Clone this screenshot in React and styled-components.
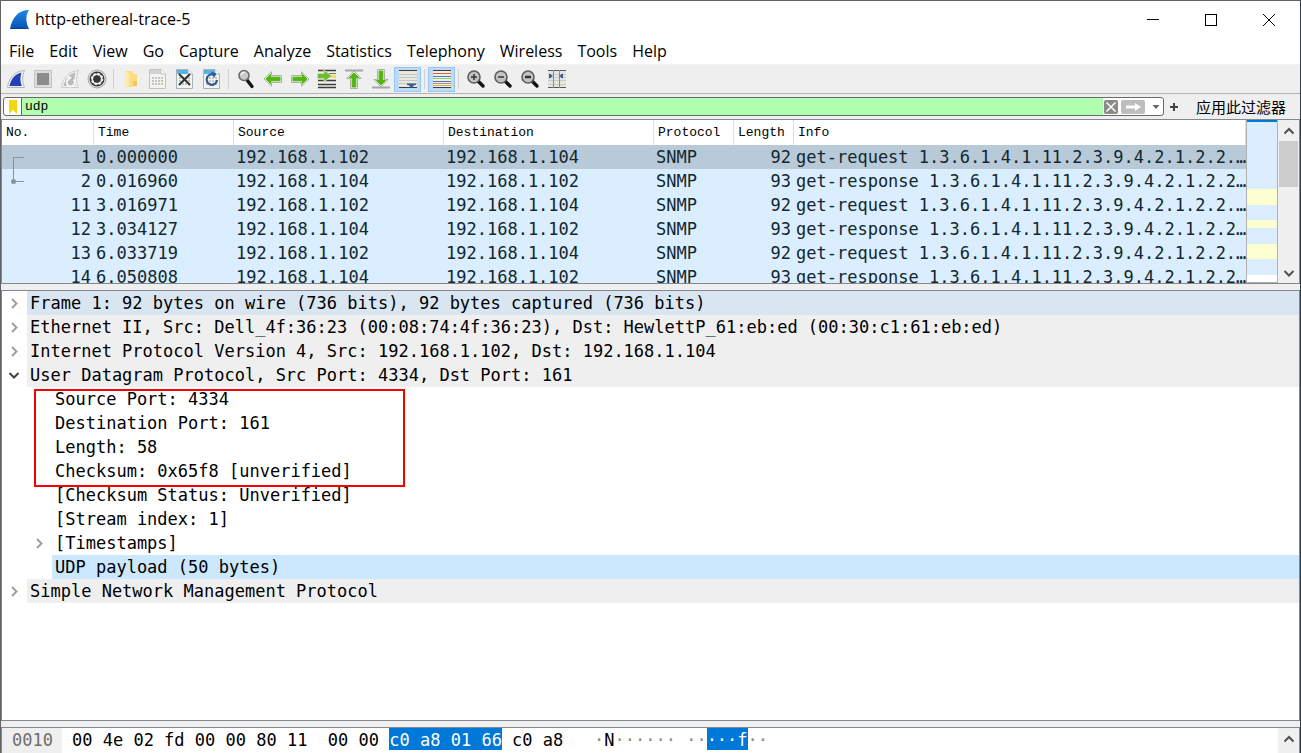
import React from "react";
import styled, { createGlobalStyle, css } from "styled-components";

const ui = `"Open Sans", "Noto Sans", "Noto Sans CJK SC", sans-serif`;
const mono = `"DejaVu Sans Mono", "Liberation Mono", monospace`;
const typewriter = `"Liberation Mono", "DejaVu Sans Mono", monospace`;

const GlobalStyle = createGlobalStyle`
  * {
    box-sizing: border-box;
  }
  body {
    margin: 0;
    background: #efefef;
  }
  button, input {
    font: inherit;
    color: inherit;
    margin: 0;
    padding: 0;
    border: none;
    background: none;
    outline: none;
  }
`;

const StyledWindow = styled.div`
  display: flex;
  flex-direction: column;
  height: 100vh;
  border: 1px solid #626266;
  border-right-color: #2c3e4a;
  border-bottom: none;
  background: #efefef;
  color: #000;
  font-family: ${ui};
  font-size: 16px;
  overflow: hidden;
`;

const StyledTitleBar = styled.header`
  display: flex;
  align-items: center;
  height: 37px;
  flex: none;
  padding: 0 2px 0 8px;
  background: #fff;
`;

const StyledTitle = styled.h1`
  flex: 1;
  margin: 0 0 0 5px;
  font-size: 16px;
  font-weight: 400;
  line-height: 35px;
`;

const StyledWindowButton = styled.button`
  display: flex;
  align-items: center;
  justify-content: center;
  width: 58px;
  height: 37px;
`;

const StyledMenuBar = styled.nav`
  display: flex;
  flex: none;
  gap: 15px;
  height: 27px;
  padding-left: 8px;
  background: #fff;
  border-bottom: 1px solid #f4f4f4;
  line-height: 26px;
`;

const StyledToolBar = styled.div`
  display: flex;
  align-items: center;
  flex: none;
  height: 29px;
  padding-left: 1px;
  border-bottom: 1px solid #b4b4b4;
`;

const StyledToolButton = styled.button`
  display: flex;
  align-items: center;
  justify-content: center;
  width: 27px;
  height: 25px;
  ${({ $active }) =>
    $active &&
    css`
      background: #bfdaf2;
      border: 1px solid #90c8f6;
    `}
`;

const StyledSeparator = styled.span`
  width: 1px;
  height: 20px;
  margin: 0 3px;
  background: #d0d0d0;
`;

const StyledFilterBar = styled.form`
  display: flex;
  align-items: center;
  flex: none;
  height: 25px;
  padding: 0 14px 0 2px;
`;

const StyledFilterField = styled.div`
  display: flex;
  align-items: center;
  flex: 1;
  height: 19px;
  border: 1px solid #6a6a6a;
  border-radius: 3px;
  background: #fff;
  overflow: hidden;
`;

const StyledBookmark = styled.button`
  display: flex;
  align-items: center;
  justify-content: center;
  width: 18px;
  height: 17px;
  border-right: 1px solid #6a6a6a;
`;

const StyledFilterInput = styled.input`
  flex: 1;
  min-width: 0;
  height: 17px;
  padding-left: 3px;
  background: #afffaf;
  font-family: ${typewriter};
  font-size: 13px;
`;

const StyledFieldButton = styled.button`
  display: flex;
  align-items: center;
  justify-content: center;
  width: ${({ $width }) => $width}px;
  height: 14px;
  margin-left: ${({ $gap }) => $gap || 1}px;
  border-radius: 2px;
  background: ${({ $fill }) => $fill || "none"};
`;

const StyledAddButton = styled.button`
  display: flex;
  align-items: center;
  justify-content: center;
  width: 20px;
  height: 20px;
`;

const StyledApplyButton = styled.button`
  margin-left: 12px;
  font-family: "Noto Sans CJK SC", sans-serif;
  font-size: 15px;
  line-height: 20px;
`;

const pane = css`
  border: 1px solid #828790;
  background: #fff;
  overflow: hidden;
`;

const StyledListPane = styled.section`
  ${pane}
  display: flex;
  flex: none;
  height: 165px;
`;

const StyledListView = styled.div`
  flex: 1;
  min-width: 0;
  overflow: hidden;
`;

const StyledTable = styled.table`
  width: 100%;
  table-layout: fixed;
  border-collapse: separate;
  border-spacing: 0;
  color: #12272e;
  font-family: ${mono};
  font-size: 17px;
`;

const StyledHeadCell = styled.th`
  width: ${({ $width }) => ($width ? `${$width}px` : "auto")};
  height: 25px;
  padding: 0 0 0 4px;
  border-right: 1px solid #e0e0e0;
  background: #fff;
  color: #000;
  font-family: ${typewriter};
  font-size: 13px;
  font-weight: 400;
  text-align: left;
  white-space: nowrap;
`;

const StyledPacketRow = styled.tr`
  background: ${({ $selected }) => ($selected ? "#b8cad8" : "#daeeff")};
`;

const StyledCell = styled.td`
  height: 24px;
  padding: 0 ${({ $right }) => ($right ? 3 : 0)}px 0 2px;
  line-height: 24px;
  text-align: ${({ $right }) => ($right ? "right" : "left")};
  white-space: nowrap;
`;

const StyledNumber = styled.div`
  display: flex;
  justify-content: space-between;
  height: 24px;
`;

const StyledMiniMap = styled.div`
  flex: none;
  width: 32px;
  border: 1px solid #b0b0b0;
  border-top: none;
`;

const StyledStripe = styled.div`
  height: ${({ $height }) => $height}px;
  background: ${({ $color }) => $color};
`;

const StyledScrollBar = styled.div`
  display: flex;
  flex-direction: column;
  flex: none;
  width: 21px;
  padding: 0 1px;
  background: #f0f0f0;
`;

const StyledScrollButton = styled.button`
  display: flex;
  align-items: center;
  justify-content: center;
  height: 21px;
  flex: none;
`;

const StyledScrollTrack = styled.div`
  flex: 1;
`;

const StyledScrollThumb = styled.div`
  height: 46px;
  background: #cdcdcd;
`;

const StyledSplitter = styled.div`
  flex: none;
  height: 6px;
  background: #efefef;
`;

const StyledDetailPane = styled.section`
  ${pane}
  flex: 1;
  min-height: 0;
  font-family: ${mono};
  font-size: 17px;
`;

const StyledTreeRow = styled.div`
  display: flex;
  height: 24px;
  padding-left: ${({ $depth }) => $depth * 25}px;
  line-height: 24px;
  white-space: pre;
`;

const StyledExpander = styled.button`
  display: flex;
  align-items: center;
  justify-content: center;
  flex: none;
  width: 25px;
  height: 24px;
  padding-right: 2px;
`;

const StyledIndent = styled.span`
  flex: none;
  width: 25px;
`;

const StyledTreeLabel = styled.span`
  flex: 1;
  padding-left: 3px;
  background: ${({ $fill }) => $fill || "none"};
`;

const StyledMarkedGroup = styled.div`
  position: relative;
`;

const StyledMark = styled.div`
  position: absolute;
  top: 2px;
  bottom: -4px;
  left: 32px;
  width: 371px;
  border: 2px solid #f80000;
  pointer-events: none;
`;

const StyledBytesPane = styled.section`
  ${pane}
  display: flex;
  flex: none;
  height: 26px;
  border-bottom: none;
  font-family: ${mono};
  font-size: 17px;
  line-height: 24px;
  white-space: pre;
`;

const StyledOffset = styled.span`
  width: 60px;
  padding-left: 10px;
  background: #efefef;
  color: #6e6e6e;
`;

const StyledBytes = styled.span`
  flex: 1;
  padding-left: 10px;
`;

const StyledSelection = styled.span`
  display: inline-block;
  height: 22px;
  background: #0078d7;
  color: #fff;
`;

const StyledDim = styled.span`
  color: #8c8c8c;
`;

const Icon = ({ size = 20, children }) => (
  <svg
    width={size}
    height={size}
    viewBox={`0 0 ${size} ${size}`}
    fill="none"
    aria-hidden="true"
  >
    {children}
  </svg>
);

const Logo = () => (
  <Icon size={21}>
    <defs>
      <linearGradient id="fin" x1="0" y1="0" x2="0" y2="1">
        <stop offset="0" stopColor="#1f8ae6" />
        <stop offset="1" stopColor="#0b4fb5" />
      </linearGradient>
    </defs>
    <path
      d="M1 20C3 9 9 1 20 1C16.500 6 16.500 13 20 20Z"
      fill="url(#fin)"
    />
    <path d="M1 20C3 19 8 18 11 18.500S17 19 20 20Z" fill="#0a3f96" />
  </Icon>
);

const FinIcon = ({ fill, stroke, restart }) => (
  <Icon>
    <path
      d="M1.500 18.500C2.500 10 8 2 18.500 1.500C16 7 16 13 18.500 18.500Z"
      fill="#f2f2f2"
      stroke={stroke}
    />
    <path d="M3.500 17C5 10 9 5 15.500 3.500C14 8 14 13 15.800 17Z" fill={fill} />
    {restart && (
      <>
        <path
          d="M8 10.500A4 4 0 1 0 13.500 10.500"
          stroke="#f6f6f6"
          strokeWidth="2"
        />
        <path d="M7 7L12 8L8.500 12Z" fill="#f6f6f6" />
      </>
    )}
  </Icon>
);

const StopIcon = () => (
  <Icon>
    <rect x="1.500" y="1.500" width="17" height="17" fill="#dcdcdc" stroke="#c4c4c4" />
    <rect x="4" y="4" width="12" height="12" fill="#8c8c8c" />
  </Icon>
);

const OptionsIcon = () => (
  <Icon>
    <circle cx="10" cy="10" r="9" fill="#e4e4e4" stroke="#a8a8a8" />
    <circle cx="10" cy="10" r="7.500" fill="#383838" />
    <circle cx="10" cy="10" r="4.800" stroke="#f2f2f2" strokeWidth="1.600" />
    <circle
      cx="10"
      cy="10"
      r="5"
      stroke="#f2f2f2"
      strokeWidth="2.400"
      strokeDasharray="1.900 2.027"
    />
    <circle cx="10" cy="10" r="2.600" fill="#383838" />
  </Icon>
);

const FolderIcon = () => (
  <Icon>
    <path d="M4 2H12V5H16V17L10 18H4Z" fill="#fbdc83" />
    <path d="M4 2L8 4V19L4 17Z" fill="#fde9a9" />
    <path d="M12 12H16V17H12Z" fill="#f2c65b" />
  </Icon>
);

const FileIcon = ({ top, border, kind }) => (
  <Icon>
    <path d="M1.500 0.500H13L17.500 5V19.500H1.500Z" fill="#f4f4ee" stroke={border} />
    <path d="M2 1H13L17 5H2Z" fill={top} />
    <path d="M13 0.500V5H17.500" fill="#fff" stroke={border} />
    <path
      d="M4 9H15M4 12H15M4 15H15"
      stroke="#c4c4c4"
      strokeWidth="2"
      strokeDasharray="2 1"
    />
    {kind === "close" && (
      <path d="M4 5L15 16M15 5L4 16" stroke="#2c3338" strokeWidth="2" />
    )}
    {kind === "reload" && (
      <>
        <path
          d="M13 6.500A5.200 5.200 0 1 0 15 11"
          stroke="#2d5a99"
          strokeWidth="2.200"
        />
        <path d="M9 2.500L14.500 4.500L12 9Z" fill="#2d5a99" />
      </>
    )}
  </Icon>
);

const FindIcon = () => (
  <Icon>
    <path d="M11 11L16 17.500" stroke="#151515" strokeWidth="3.400" strokeLinecap="round" />
    <circle cx="8" cy="6.500" r="5" fill="#c9c9c9" stroke="#6c6c6c" strokeWidth="1.600" />
    <path d="M5 6A3.500 3.500 0 0 1 9 3.500" stroke="#f2f2f2" strokeWidth="1.500" />
  </Icon>
);

const ArrowIcon = ({ rotate = 0, bar }) => (
  <Icon>
    {bar && (
      <path
        d={bar === "top" ? "M1 1.500H19" : "M1 18.500H19"}
        stroke="#a5a5a5"
        strokeWidth="2"
      />
    )}
    <g
      transform={
        bar
          ? `translate(0 ${bar === "top" ? 1 : -1}) rotate(${rotate} 10 10)`
          : `rotate(${rotate} 10 10)`
      }
    >
      <path
        d="M1 10L8.500 2.800V6.500H18.500V13.500H8.500V17.200Z"
        fill="#e6efdf"
        stroke="#a9b3a2"
      />
      <path d="M3 10L7.500 5.500V8.200H17V11.800H7.500V14.500Z" fill="#52b511" stroke="#52b511" />
    </g>
  </Icon>
);

const GoToIcon = () => (
  <Icon>
    <path
      d="M1 1.500H19M1 11.500H19M1 15.500H19M1 18.500H19"
      stroke="#3c3c3c"
      strokeWidth="1.500"
    />
    <path d="M12 4.500H19" stroke="#777" />
    <path d="M13 7.500H19" stroke="#f6e04a" strokeWidth="3" />
    <path d="M0.500 4.500H7V1L14.500 7L7 13V9.500H0.500Z" fill="#6abd2c" stroke="#c4dcae" />
  </Icon>
);

const AutoScrollIcon = () => (
  <Icon>
    <rect x="1" y="1" width="18" height="18" fill="#e8e8e0" />
    <path d="M1 1.500H19M1 18.500H19" stroke="#3b3f44" />
    <path d="M1 5.500H19M1 8.500H19M1 11.500H19M1 14.500H19" stroke="#c3c6c2" />
    <path d="M9 14.500H18V16H16.500L13.500 19L10.500 16H9Z" fill="#315f9f" />
  </Icon>
);

const ColorizeIcon = () => (
  <Icon>
    <rect x="1" y="1" width="18" height="18" fill="#efefe6" />
    <path d="M1 1.500H19M1 18.500H19" stroke="#3b3f44" />
    <path d="M1 4.500H19" stroke="#e8574c" />
    <path d="M1 7.500H19" stroke="#4a7cc0" />
    <path d="M1 9.500H19" stroke="#8fd35c" />
    <path d="M1 12.500H19" stroke="#5a6fb0" />
    <path d="M1 14.500H19" stroke="#a588ac" />
    <path d="M1 16.500H19" stroke="#d3ae3b" />
  </Icon>
);

const ZoomIcon = ({ kind }) => (
  <Icon>
    <path d="M12 12L17 17" stroke="#111" strokeWidth="3.400" strokeLinecap="round" />
    <circle cx="8" cy="8" r="6" fill="#c3c3c3" stroke="#5c5c5c" strokeWidth="1.600" />
    <path
      d={kind === "in" ? "M5 8H11M8 5V11" : "M5 8H11"}
      stroke="#333"
      strokeWidth={kind === "reset" ? 2.5 : 1.5}
    />
  </Icon>
);

const ColumnsIcon = () => (
  <Icon>
    <rect x="1" y="1" width="18" height="18" fill="#e4e6df" />
    <path d="M1 5.500H19M1 8.500H19M1 11.500H19M1 15.500H19" stroke="#c8cbc4" />
    <path d="M1 1.500H19M1 18.500H19" stroke="#55585a" />
    <path d="M6.500 1V19M12.500 1V19" stroke="#8a8c8a" />
    <path d="M2 4.500L6 7L2 9.500ZM16 4.500L12 7L16 9.500Z" fill="#315f9f" />
    <path d="M2 5H4V9H2ZM14 5H16V9H14Z" fill="#315f9f" />
  </Icon>
);

const Chevron = ({ direction = "right", color = "#a0a0a0" }) => {
  const paths = {
    right: "M4 2L8.500 6.500L4 11",
    down: "M1.500 4L6 8.500L10.500 4",
    up: "M1.500 8.500L6 4L10.500 8.500",
  };
  return (
    <Icon size={12}>
      <path d={paths[direction]} stroke={color} strokeWidth="2" />
    </Icon>
  );
};

const menus = [
  "File",
  "Edit",
  "View",
  "Go",
  "Capture",
  "Analyze",
  "Statistics",
  "Telephony",
  "Wireless",
  "Tools",
  "Help",
];

const tools = [
  { label: "Start capture", icon: <FinIcon fill="#2142b5" stroke="#b5b5b5" /> },
  { label: "Stop capture", icon: <StopIcon /> },
  {
    label: "Restart capture",
    icon: <FinIcon fill="#b9b9b9" stroke="#cccccc" restart />,
  },
  { label: "Capture options", icon: <OptionsIcon /> },
  null,
  { label: "Open", icon: <FolderIcon /> },
  { label: "Save", icon: <FileIcon top="#d2d2d2" border="#c2c2c2" /> },
  { label: "Close", icon: <FileIcon top="#58b4e4" border="#a9b4b9" kind="close" /> },
  { label: "Reload", icon: <FileIcon top="#58b4e4" border="#a9b4b9" kind="reload" /> },
  null,
  { label: "Find packet", icon: <FindIcon /> },
  { label: "Previous packet", icon: <ArrowIcon /> },
  { label: "Next packet", icon: <ArrowIcon rotate={180} /> },
  { label: "Go to packet", icon: <GoToIcon /> },
  { label: "First packet", icon: <ArrowIcon rotate={90} bar="top" /> },
  { label: "Last packet", icon: <ArrowIcon rotate={270} bar="bottom" /> },
  { label: "Auto scroll", icon: <AutoScrollIcon />, active: true },
  null,
  { label: "Colorize", icon: <ColorizeIcon />, active: true },
  null,
  { label: "Zoom in", icon: <ZoomIcon kind="in" /> },
  { label: "Zoom out", icon: <ZoomIcon kind="out" /> },
  { label: "Normal size", icon: <ZoomIcon kind="reset" /> },
  { label: "Resize columns", icon: <ColumnsIcon /> },
];

const columns = [
  { name: "No.", width: 92 },
  { name: "Time", width: 140 },
  { name: "Source", width: 210 },
  { name: "Destination", width: 210 },
  { name: "Protocol", width: 80 },
  { name: "Length", width: 60 },
  { name: "Info" },
];

const request = "get-request 1.3.6.1.4.1.11.2.3.9.4.2.1.2.2.…";
const response = "get-response 1.3.6.1.4.1.11.2.3.9.4.2.1.2.2…";

const packets = [
  [1, "0.000000", "192.168.1.102", "192.168.1.104", "SNMP", 92, request],
  [2, "0.016960", "192.168.1.104", "192.168.1.102", "SNMP", 93, response],
  [11, "3.016971", "192.168.1.102", "192.168.1.104", "SNMP", 92, request],
  [12, "3.034127", "192.168.1.104", "192.168.1.102", "SNMP", 93, response],
  [13, "6.033719", "192.168.1.102", "192.168.1.104", "SNMP", 92, request],
  [14, "6.050808", "192.168.1.104", "192.168.1.102", "SNMP", 93, response],
];

const stripes = [
  [2, "#0078d7"],
  [67, "#daeeff"],
  [16, "#feffd0"],
  [15, "#daeeff"],
  [8, "#feffd0"],
  [16, "#daeeff"],
  [15, "#feffd0"],
  [16, "#daeeff"],
];

const TreeRow = ({ depth = 0, expander, fill, children }) => (
  <StyledTreeRow $depth={depth}>
    {expander ? (
      <StyledExpander aria-label={children}>
        <Chevron
          direction={expander}
          color={expander === "down" ? "#404040" : "#a0a0a0"}
        />
      </StyledExpander>
    ) : (
      <StyledIndent />
    )}
    <StyledTreeLabel $fill={fill}>{children}</StyledTreeLabel>
  </StyledTreeRow>
);

const PacketList = () => (
  <StyledListPane>
    <StyledListView>
      <StyledTable>
        <thead>
          <tr>
            {columns.map((column) => (
              <StyledHeadCell key={column.name} $width={column.width}>
                {column.name}
              </StyledHeadCell>
            ))}
          </tr>
        </thead>
        <tbody>
          {packets.map(([no, time, source, destination, protocol, length, info]) => (
            <StyledPacketRow key={no} $selected={no === 1}>
              <StyledCell $right>
                <StyledNumber>
                  <Icon size={24}>
                    {no === 1 && <path d="M9.500 24V12.500H20" stroke="#87949c" />}
                    {no === 2 && (
                      <>
                        <path d="M9.500 0V12.500H20" stroke="#87949c" />
                        <circle cx="9.500" cy="12.500" r="2.500" fill="#87949c" />
                      </>
                    )}
                  </Icon>
                  {no}
                </StyledNumber>
              </StyledCell>
              <StyledCell>{time}</StyledCell>
              <StyledCell>{source}</StyledCell>
              <StyledCell>{destination}</StyledCell>
              <StyledCell>{protocol}</StyledCell>
              <StyledCell $right>{length}</StyledCell>
              <StyledCell>{info}</StyledCell>
            </StyledPacketRow>
          ))}
        </tbody>
      </StyledTable>
    </StyledListView>
    <StyledMiniMap>
      {stripes.map(([height, color], index) => (
        <StyledStripe key={index} $height={height} $color={color} />
      ))}
    </StyledMiniMap>
    <StyledScrollBar>
      <StyledScrollButton aria-label="Scroll up">
        <Chevron direction="up" color="#505050" />
      </StyledScrollButton>
      <StyledScrollTrack>
        <StyledScrollThumb />
      </StyledScrollTrack>
      <StyledScrollButton aria-label="Scroll down">
        <Chevron direction="down" color="#505050" />
      </StyledScrollButton>
    </StyledScrollBar>
  </StyledListPane>
);

const PacketDetails = () => (
  <StyledDetailPane>
    <TreeRow expander="right" fill="#d9e6f2">
      Frame 1: 92 bytes on wire (736 bits), 92 bytes captured (736 bits)
    </TreeRow>
    <TreeRow expander="right" fill="#efefef">
      Ethernet II, Src: Dell_4f:36:23 (00:08:74:4f:36:23), Dst: HewlettP_61:eb:ed (00:30:c1:61:eb:ed)
    </TreeRow>
    <TreeRow expander="right" fill="#efefef">
      Internet Protocol Version 4, Src: 192.168.1.102, Dst: 192.168.1.104
    </TreeRow>
    <TreeRow expander="down" fill="#efefef">
      User Datagram Protocol, Src Port: 4334, Dst Port: 161
    </TreeRow>
    <StyledMarkedGroup>
      <TreeRow depth={1}>Source Port: 4334</TreeRow>
      <TreeRow depth={1}>Destination Port: 161</TreeRow>
      <TreeRow depth={1}>Length: 58</TreeRow>
      <TreeRow depth={1}>Checksum: 0x65f8 [unverified]</TreeRow>
      <StyledMark />
    </StyledMarkedGroup>
    <TreeRow depth={1}>[Checksum Status: Unverified]</TreeRow>
    <TreeRow depth={1}>[Stream index: 1]</TreeRow>
    <TreeRow depth={1} expander="right">
      [Timestamps]
    </TreeRow>
    <TreeRow depth={1} fill="#cce8ff">
      UDP payload (50 bytes)
    </TreeRow>
    <TreeRow expander="right" fill="#efefef">
      Simple Network Management Protocol
    </TreeRow>
  </StyledDetailPane>
);

const PacketBytes = () => (
  <StyledBytesPane>
    <StyledOffset>0010</StyledOffset>
    <StyledBytes>
      {"00 4e 02 fd 00 00 80 11  00 00 "}
      <StyledSelection>c0 a8 01 66</StyledSelection>
      {" c0 a8   "}
      <StyledDim>·</StyledDim>N<StyledDim>{"······ ··"}</StyledDim>
      <StyledSelection>···f</StyledSelection>
      <StyledDim>··</StyledDim>
    </StyledBytes>
    <StyledScrollBar>
      <StyledScrollButton aria-label="Scroll up">
        <Chevron direction="up" color="#505050" />
      </StyledScrollButton>
    </StyledScrollBar>
  </StyledBytesPane>
);

const App = () => {
  return (
    <>
      <GlobalStyle />
      <StyledWindow>
        <StyledTitleBar>
          <Logo />
          <StyledTitle>http-ethereal-trace-5</StyledTitle>
          <StyledWindowButton aria-label="Minimize">
            <Icon size={14}>
              <path d="M1 6.500H13" stroke="#000" />
            </Icon>
          </StyledWindowButton>
          <StyledWindowButton aria-label="Maximize">
            <Icon size={14}>
              <rect x="1.500" y="1.500" width="11" height="11" stroke="#000" />
            </Icon>
          </StyledWindowButton>
          <StyledWindowButton aria-label="Close window">
            <Icon size={14}>
              <path d="M1 1L13 13M13 1L1 13" stroke="#000" />
            </Icon>
          </StyledWindowButton>
        </StyledTitleBar>

        <StyledMenuBar>
          {menus.map((menu) => (
            <button key={menu}>{menu}</button>
          ))}
        </StyledMenuBar>

        <StyledToolBar>
          {tools.map((tool, index) =>
            tool ? (
              <StyledToolButton
                key={tool.label}
                aria-label={tool.label}
                $active={tool.active}
              >
                {tool.icon}
              </StyledToolButton>
            ) : (
              <StyledSeparator key={index} />
            )
          )}
        </StyledToolBar>

        <StyledFilterBar onSubmit={(event) => event.preventDefault()}>
          <StyledFilterField>
            <StyledBookmark type="button" aria-label="Filter bookmarks">
              <Icon size={14}>
                <path d="M3 0H11V14L7 10L3 14Z" fill="#f2d90c" />
              </Icon>
            </StyledBookmark>
            <StyledFilterInput
              type="text"
              aria-label="Display filter"
              defaultValue="udp"
            />
            <StyledFieldButton
              type="button"
              aria-label="Clear filter"
              $width={14}
              $fill="#8a8a86"
            >
              <Icon size={14}>
                <path d="M2.500 2.500L11.500 11.500M11.500 2.500L2.500 11.500" stroke="#fff" strokeWidth="1.500" />
              </Icon>
            </StyledFieldButton>
            <StyledFieldButton
              type="submit"
              aria-label="Apply filter"
              $width={24}
              $gap={3}
              $fill="#bdbdbd"
            >
              <Icon size={18}>
                <path d="M2 7.500H11V5L17 9L11 13V10.500H2Z" fill="#fff" />
              </Icon>
            </StyledFieldButton>
            <StyledFieldButton
              type="button"
              aria-label="Recent filters"
              $width={14}
              $gap={4}
            >
              <Icon size={8}>
                <path d="M0.500 2H7.500L4 6Z" fill="#666" />
              </Icon>
            </StyledFieldButton>
          </StyledFilterField>
          <StyledAddButton type="button" aria-label="Add filter button">
            <Icon size={10}>
              <path d="M1 5H9M5 1V9" stroke="#444" strokeWidth="2" />
            </Icon>
          </StyledAddButton>
          <StyledApplyButton type="button">应用此过滤器</StyledApplyButton>
        </StyledFilterBar>

        <PacketList />
        <StyledSplitter />
        <PacketDetails />
        <StyledSplitter />
        <PacketBytes />
      </StyledWindow>
    </>
  );
};

export default App;
